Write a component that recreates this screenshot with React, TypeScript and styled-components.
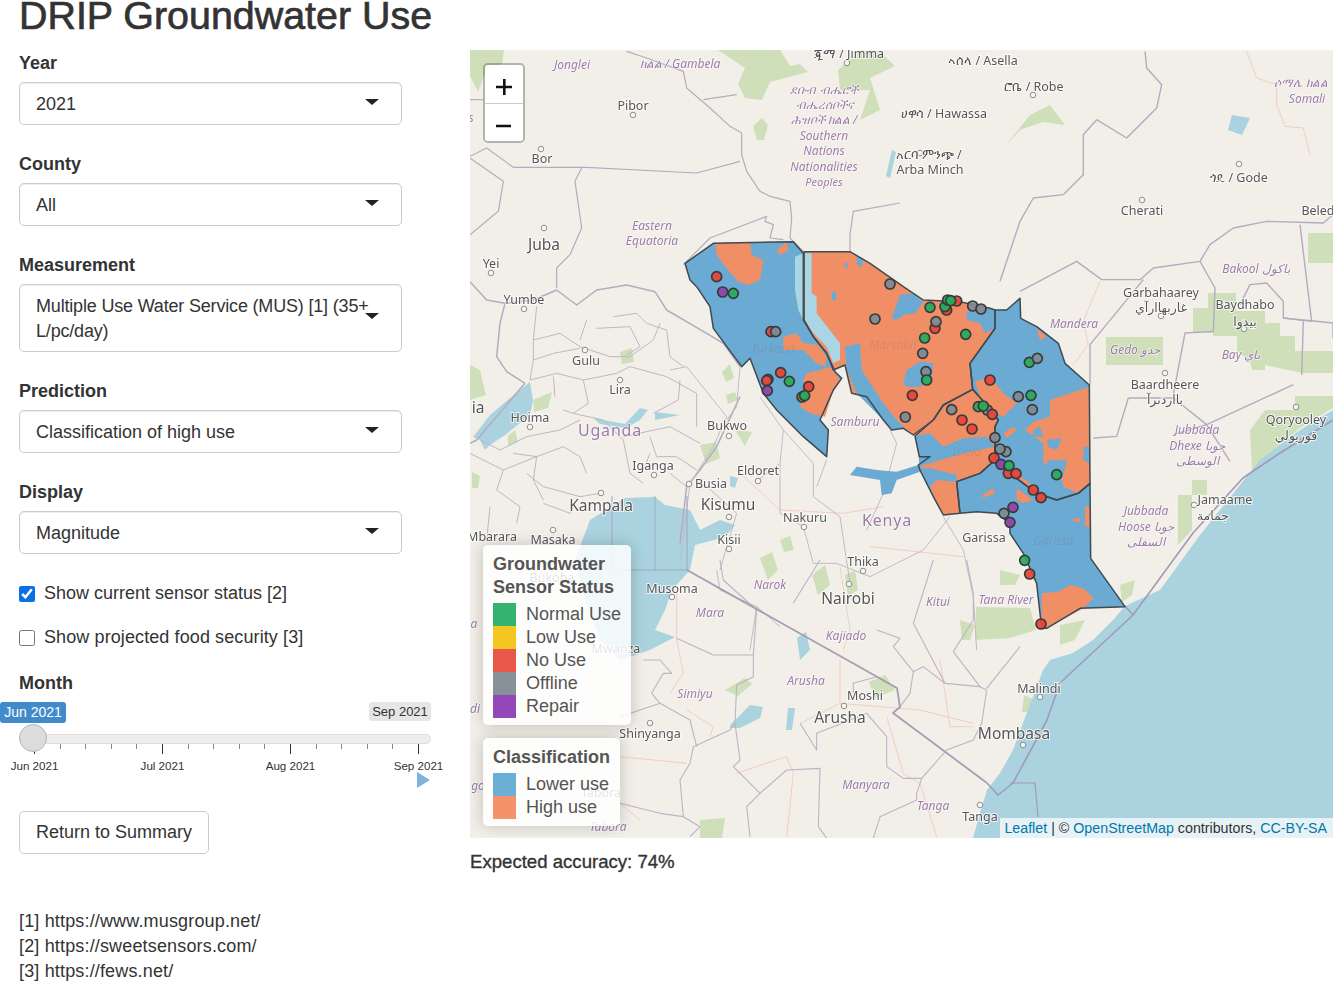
import React from "react";
import styled, { createGlobalStyle } from "styled-components";

const GlobalStyle = createGlobalStyle`
  html, body { margin: 0; padding: 0; height: 982px; overflow: hidden; background: #fff; }
  body { font-family: "Liberation Sans", Arial, sans-serif; color: #333; }
`;

const Page = styled.div`
  width: 1333px;
  height: 982px;
  overflow: hidden;
`;
const Title = styled.h1`
  margin: -5px 0 15px 19px;
  font-size: 39.4px;
  line-height: 40px;
  font-weight: 400;
  -webkit-text-stroke: 0.7px #333;
  color: #333;
`;
const Row = styled.div`
  display: flex;
  align-items: flex-start;
`;
const Sidebar = styled.div`
  width: 470px;
  flex: none;
  padding-left: 19px;
  box-sizing: border-box;
  font-size: 18px;
  line-height: 25px;
`;
const Group = styled.div`
  width: 383px;
  margin-bottom: 26px;
`;
const Label = styled.div`
  font-weight: 700;
  padding-top: 1px;
  margin-bottom: 6px;
`;
const SelectBox = styled.div<{ $tight?: boolean }>`
  position: relative;
  border: 1px solid #ccc;
  border-radius: 5px;
  padding: 9px 16px 7px;
  background: #fff;
  box-shadow: inset 0 1px 1px rgba(0, 0, 0, 0.075);
  letter-spacing: ${(p) => (p.$tight ? "-0.18px" : "0")};
`;
const Caret = styled.span`
  position: absolute;
  right: 22px;
  top: calc(50% - 5px);
  border-style: solid;
  border-width: 6px 7px 0 7px;
  border-color: #222 transparent transparent transparent;
`;
const CheckRow = styled.label<{ $after: number; $wide?: boolean }>`
  display: flex;
  align-items: center;
  gap: 9px;
  height: 25px;
  padding-top: 1px;
  margin-bottom: ${(p) => p.$after}px;
  letter-spacing: ${(p) => (p.$wide ? "0.1px" : "0")};
`;
const CheckInput = styled.input`
  width: 16px;
  height: 16px;
  margin: 0;
  accent-color: #0b6fe8;
`;
const MonthLabel = styled(Label)`
  margin-bottom: 0;
`;
const SliderRoot = styled.div`
  position: relative;
  width: 413px;
  height: 90px;
  padding-top: 38px;
  box-sizing: border-box;
`;
const Track = styled.div`
  margin-left: 14px;
  width: 398px;
  height: 10px;
  box-sizing: border-box;
  border: 1px solid #ddd;
  border-radius: 5px;
  background: #eee;
`;
const Handle = styled.div`
  position: absolute;
  left: 0;
  top: 28px;
  width: 28px;
  height: 28px;
  box-sizing: border-box;
  border-radius: 50%;
  border: 1px solid #b5b5b5;
  background: #dcdcdc;
`;
const Badge = styled.div<{ $active?: boolean }>`
  position: absolute;
  top: 6px;
  left: ${(p) => (p.$active ? "-19px" : "350px")};
  width: ${(p) => (p.$active ? "66px" : "62px")};
  height: ${(p) => (p.$active ? "21px" : "19px")};
  border-radius: 3px;
  text-align: center;
  font-size: ${(p) => (p.$active ? "14px" : "13px")};
  line-height: ${(p) => (p.$active ? "21px" : "19px")};
  background: ${(p) => (p.$active ? "#428bca" : "#e6e6e6")};
  color: ${(p) => (p.$active ? "#fff" : "#333")};
`;
const TickRow = styled.div`
  display: flex;
  justify-content: space-between;
  margin-left: 15px;
  width: 385px;
`;
const Tick = styled.span<{ $major: boolean }>`
  width: 1px;
  height: ${(p) => (p.$major ? "10px" : "5px")};
  background: ${(p) => (p.$major ? "#333" : "#888")};
`;
const TickLabels = styled.div`
  display: flex;
  justify-content: space-between;
  margin: 3px 0 0 15px;
  width: 385px;
  font-size: 11.6px;
  line-height: 17px;
`;
const TickLabel = styled.span`
  width: 1px;
  display: flex;
  justify-content: center;
  white-space: nowrap;
`;
const Play = styled.div`
  width: 0;
  height: 0;
  margin: -2px 0 0 398px;
  border-style: solid;
  border-width: 8px 0 8px 13px;
  border-color: transparent transparent transparent #7fb2dd;
`;
const Button = styled.button`
  display: block;
  margin-top: 25px;
  padding: 8px 16px;
  border: 1px solid #ccc;
  border-radius: 5px;
  background: #fff;
  color: #333;
  font: inherit;
  line-height: 25px;
`;
const Notes = styled.div`
  margin-top: 55px;
  white-space: nowrap;
  letter-spacing: 0.16px;
`;
const Main = styled.div`
  flex: 1;
  min-width: 0;
`;
const MapBox = styled.div`
  position: relative;
  height: 788px;
  overflow: hidden;
  background: #f2efe9;
`;
const MapSvg = styled.svg`
  display: block;
  filter: blur(0.45px);
`;
const ZoomBar = styled.div`
  position: absolute;
  left: 13px;
  top: 13px;
  border: 2px solid rgba(0, 0, 0, 0.25);
  border-radius: 5px;
  overflow: hidden;
  background-clip: padding-box;
`;
const ZoomButton = styled.div`
  width: 38px;
  height: 38px;
  box-sizing: border-box;
  padding-top: 6px;
  background: #fff;
  display: flex;
  align-items: center;
  justify-content: center;
  & + & { border-top: 1px solid #ccc; }
`;
const LegendStack = styled.div`
  position: absolute;
  left: 13px;
  bottom: 12px;
  display: flex;
  flex-direction: column;
  align-items: flex-start;
  gap: 13px;
`;
const Legend = styled.div`
  padding: 8px 10px 7px;
  border-radius: 5px;
  background: rgba(255, 255, 255, 0.84);
  box-shadow: 0 0 15px rgba(0, 0, 0, 0.2);
  color: #555;
  font-size: 18px;
  line-height: 23px;
`;
const LegendTitle = styled.div`
  font-weight: 700;
  margin-bottom: 4px;
`;
const LegendItem = styled.div`
  display: flex;
  gap: 10px;
  white-space: nowrap;
`;
const Swatch = styled.i<{ $c: string }>`
  width: 23px;
  height: 23px;
  background: ${(p) => p.$c};
`;
const Attribution = styled.div`
  position: absolute;
  right: 0;
  bottom: 0;
  padding: 0 6px 0 4px;
  height: 20px;
  line-height: 20px;
  font-size: 14.25px;
  color: #333;
  background: rgba(255, 255, 255, 0.7);
`;
const MapLink = styled.span`
  color: #0078a8;
`;
const Accuracy = styled.div`
  margin-top: 11px;
  font-size: 18.6px;
  line-height: 25px;
  -webkit-text-stroke: 0.35px #333;
`;

const Line = styled.polyline<{ $c?: string; $w?: number }>`
  fill: none;
  stroke: ${(p) => p.$c || "#b5abbf"};
  stroke-width: ${(p) => p.$w || 1.2}px;
  stroke-linejoin: round;
  vector-effect: non-scaling-stroke;
`;
const Area = styled.polygon<{ $c: string; $o?: number }>`
  fill: ${(p) => p.$c};
  opacity: ${(p) => p.$o ?? 1};
`;
const Border = styled.polygon`
  fill: none;
  stroke: #3e4a52;
  stroke-width: 1.5px;
  stroke-linejoin: round;
  vector-effect: non-scaling-stroke;
`;
const Dot = styled.circle<{ $c: string }>`
  fill: ${(p) => p.$c};
  stroke: #3a3a3a;
  stroke-width: 1.7px;
  fill-opacity: 0.95;
  vector-effect: non-scaling-stroke;
`;
const Place = styled.circle`
  fill: #f8f6f2;
  stroke: #8d8d8d;
  stroke-width: 1px;
`;
const City = styled.text<{ $s?: number }>`
  font-family: "Noto Sans", "DejaVu Sans", sans-serif;
  font-size: ${(p) => p.$s || 12.5}px;
  fill: #555;
  text-anchor: middle;
  stroke: rgba(255, 255, 255, 0.75);
  stroke-width: 2px;
  paint-order: stroke;
`;
const Region = styled.text<{ $s?: number; $plain?: boolean }>`
  font-family: "Noto Sans", "DejaVu Sans", sans-serif;
  font-size: ${(p) => p.$s || 12}px;
  font-style: ${(p) => (p.$plain ? "normal" : "italic")};
  letter-spacing: ${(p) => (p.$plain ? "0.8px" : "0")};
  fill: #9b7ca8;
  text-anchor: middle;
  stroke: rgba(255, 255, 255, 0.6);
  stroke-width: 1.5px;
  paint-order: stroke;
`;
const Faint = styled.text`
  font-family: "Noto Sans", sans-serif;
  font-size: 36px;
  font-style: italic;
  text-anchor: middle;
  opacity: 0.18;
  fill: #7a5a7a;
`;

const WATER = "#aad3df";
const GREEN = "#cfdfba";
const PINK = "#efcbbb";
const BLUE = "#6baad3";
const ORANGE = "#f08f66";
const PALE = "#a9d5e5";
const RED = "#e8453a";
const LIME = "#25ad5c";
const GRAY = "#7f8a93";
const PURPLE = "#8e44ad";

// frames: each list was traced on a 3x crop, so it is drawn at 1/3 scale from the crop's corner
const Frame = ({ x, y, children }: { x: number; y: number; children: React.ReactNode }) => (
  <g transform={`translate(${x} ${y}) scale(${1 / 3})`}>{children}</g>
);

const topLines = [
  "470,10 530,30 640,70 650,120 720,180 780,235 815,255 815,320 830,370 870,430 900,445 960,460 965,510 960,570 1000,610",
  "0,325 50,300 130,358 350,358 680,375 810,340",
  "335,360 315,400 335,540 300,620 260,660 260,720",
  "0,330 100,400 85,490 0,560",
  "640,650 720,570 890,505 885,520 910,530 900,570 940,575",
  "700,155 800,140",
  "1140,720 1140,560 1150,490 1290,465",
  "0,155 40,155",
];
const ugandaLines = [
  "0,125 50,180 105,190 90,250 80,350 110,395 165,430",
  "105,190 190,180 260,150 320,195 380,150 470,135 555,155",
  "555,155 590,210 710,280 760,310 810,380",
  "810,470 740,620 690,690 650,740 630,910",
  "165,430 20,600 0,610",
];
const ugandaThin = [
  "190,300 270,280 330,320 420,350 480,350 550,300 570,250",
  "190,360 250,340 330,325",
  "350,240 330,300",
  "380,265 480,260 510,320 470,345",
  "430,230 500,220 530,250 590,270 600,350 640,380",
  "180,420 260,400 340,420 355,490 310,520 280,510",
  "250,410 255,470",
  "340,420 440,400 480,380 590,410 680,460 680,560",
  "630,420 625,480 550,520",
  "310,520 400,540 460,600 480,700 520,730",
  "30,600 90,630 170,590 270,570 330,540",
  "100,690 200,650 280,620 330,650 350,700",
  "0,640 100,690 80,750 150,800 140,850",
  "170,700 220,740 330,770 390,760",
  "220,790 300,820 320,780",
  "460,590 600,560 690,610",
  "540,590 560,650 620,650 680,690",
  "600,700 650,740",
  "200,200 190,300 190,360 180,420",
  "130,640 200,650 190,720 220,780",
  "60,800 50,900",
  "520,690 540,640",
];
const kenyaWest = [
  "0,420 50,410 170,560 130,650 60,760",
  "210,410 200,530 170,570",
  "270,500 340,600 330,700 265,750",
  "340,600 430,700 430,800 510,860 540,1060",
  "470,690 440,770",
  "660,600 680,640 640,790 590,900",
  "820,860 880,960 910,1100 920,1260",
  "140,1020 150,1080 260,1130 330,1190",
  "260,1130 240,1260",
  "500,1000 600,1040 680,1000 760,960 840,860",
  "100,760 200,850 150,1020",
  "330,700 330,850 400,890 430,1000 500,1000",
  "60,760 30,1000",
];
const kenyaPink = [
  "200,720 330,840 520,850 640,830",
  "600,950 880,980",
  "510,1010 540,1200 520,1260",
];
const tzLines = [
  "170,235 280,285 400,285 410,150",
  "400,285 400,350 350,375 345,490 330,510 220,560 210,610 180,660 190,770 240,800 210,830",
  "345,490 360,600 340,620 420,700 500,630 600,625 595,800 620,835",
  "420,700 380,740 390,830",
  "540,490 590,570 590,520 640,500 740,460 800,530 800,620 850,655 905,655 890,700",
  "890,700 890,720 780,770 760,835",
  "880,335 910,320 975,370 1080,380 1000,275 1060,180 1060,100 1040,0",
  "880,335 870,400 840,440",
  "770,210 840,235 820,260 880,335",
  "940,0 880,190 975,370",
  "1080,380 1100,390 1085,490 1060,540 980,570 905,655",
  "1100,385 1200,260",
  "120,430 210,480 230,560",
  "0,470 120,430 95,400 130,340 155,340 120,300 70,300",
  "0,730 120,760 190,770",
  "300,0 310,60 410,150",
  "600,0 550,80 520,130",
  "700,400 700,370 770,350 830,385",
];
const tzPink = [
  "0,590 200,610",
  "170,100 170,240 190,340 150,400",
  "660,300 660,430 540,490",
  "200,450 280,500 270,530",
  "350,640 500,590 520,640 500,830",
  "660,430 900,450 1060,490",
  "800,470 850,640 900,670 950,830",
  "0,730 60,780",
  "960,300 990,500 1060,500",
];
const eastLines = [
  "435,10 440,60 485,110 470,180 380,270 290,215 250,260 250,380 190,440 100,450 60,520 0,700",
  "60,730 230,640 305,695 420,695 460,660 600,640 630,590 700,540 800,520 970,525 999,500",
  "430,695 270,890 270,1010",
  "600,640 645,720 640,850 555,855 520,1040",
  "900,530 935,820 850,810 850,760 800,705 750,710 720,770",
  "850,810 999,825",
  "910,820 905,980",
  "999,825 999,870",
  "385,1050 350,1165 280,1170",
  "385,1050 520,1050 620,1130 880,1010",
  "520,1160 620,1130 690,1240",
];
const eastPink = [
  "740,10 770,90 830,110 830,170 855,235 910,240 930,320",
  "300,700 250,820 265,890 220,950",
];

const TURKANA = "45,100 130,40 370,35 400,70 400,270 430,320 470,370 495,425 515,445 490,480 450,570 475,600 470,680 400,620 320,540 280,490 240,385 215,410 130,295 120,230 80,170 60,150";
const MARSABIT = "402,65 540,65 600,100 700,170 760,210 870,215 960,235 975,240 975,295 900,400 908,478 820,525 790,570 730,615 700,595 665,600 640,570 590,500 545,490 525,405 490,420 470,370 430,320 402,270";
const WAJIR = "975,240 1010,240 1050,205 1052,265 1100,290 1165,340 1185,400 1258,465 1260,760 1225,790 1160,810 1100,790 1040,745 1000,710 975,690 975,590 985,570 950,525 908,478 900,400 975,295";
const ISIOLO = "908,478 950,525 985,570 975,590 975,690 930,730 860,755 870,850 820,855 790,800 750,720 745,705 780,680 748,680 735,618 790,570 820,525";
const GARISSA = "860,755 930,730 975,690 1000,710 1040,745 1100,790 1160,810 1225,790 1260,760 1262,985 1365,1130 1230,1135 1130,1195 1115,1195 1100,1060 1060,970 1020,910 1020,880 980,850 920,845 870,850";

const counties: [string, string][] = [
  // base fills, then the patches on top
  [BLUE, TURKANA],
  [ORANGE, "135,40 240,35 245,75 280,90 270,150 235,165 205,155 170,115 140,75"],
  [ORANGE, "320,60 350,35 355,60 330,75"],
  [ORANGE, "340,320 380,310 400,340 445,345 470,380 465,410 440,400 400,360 340,360"],
  [ORANGE, "410,430 450,420 480,410 510,450 490,480 465,560 420,550 390,530 410,490 400,450"],
  [PALE, "375,80 400,70 400,270 385,240 375,180"],
  [ORANGE, MARSABIT],
  [PALE, "405,70 425,70 425,190 440,200 440,250 510,340 510,390 490,400 470,350 430,310 405,270"],
  [BLUE, "525,350 570,340 575,420 640,520 680,570 705,595 665,600 630,560 560,490 530,420"],
  [BLUE, "665,265 690,195 730,190 760,215 735,250 700,255 680,270"],
  [BLUE, "700,460 710,420 750,395 790,400 785,450 750,470 710,470"],
  [BLUE, "890,245 960,235 975,240 975,295 945,310 930,280 890,270"],
  [BLUE, "560,80 580,85 575,115 560,100"],
  [BLUE, "485,185 498,185 498,210 485,210"],
  [BLUE, "520,100 535,100 530,118"],
  [BLUE, WAJIR],
  [ORANGE, "1100,295 1130,320 1110,330"],
  [ORANGE, "1140,510 1200,490 1260,470 1260,760 1225,790 1180,770 1170,710 1120,700 1120,640 1065,600 1090,575 1140,560"],
  [ORANGE, "915,455 960,440 1000,490 1040,520 1000,560 960,540 930,500"],
  [ORANGE, "1000,610 1030,590 1040,600 1010,625"],
  [ORANGE, "1010,720 1040,730 1080,760 1100,790 1060,770"],
  [BLUE, "1090,600 1110,590 1120,620 1090,620"],
  [BLUE, "1130,630 1175,625 1160,660 1135,650"],
  [BLUE, "1240,650 1260,650 1260,700 1240,690"],
  [BLUE, "1130,690 1190,690 1180,740 1150,750"],
  [ORANGE, ISIOLO],
  [BLUE, "735,618 780,610 820,650 880,625 950,620 975,650 880,670 830,685 780,700 748,710 745,660"],
  [BLUE, "745,715 780,715 860,735 860,755 800,750 780,770 790,800"],
  [BLUE, "540,735 560,710 620,720 680,725 745,705 750,725 680,750 665,790 635,795 630,750"],
  [BLUE, GARISSA],
  [ORANGE, "1115,1090 1165,1085 1200,1065 1240,1075 1270,1105 1240,1135 1130,1195 1115,1195"],
  [ORANGE, "930,800 970,775 975,790 950,800"],
  [ORANGE, "1040,775 1090,810 1060,820 1040,810"],
  [ORANGE, "1245,830 1262,830 1262,890 1245,890"],
  [ORANGE, "1210,865 1230,865 1230,875 1210,875"],
];
const countyEdges = [TURKANA, MARSABIT, WAJIR, ISIOLO, GARISSA];
const sensors: [number, number, string][] = [
  [140, 140, RED], [158, 186, PURPLE], [190, 190, LIME],
  [303, 305, RED], [317, 305, GRAY],
  [332, 428, RED], [294, 448, LIME], [290, 452, RED], [292, 482, PURPLE], [358, 454, LIME],
  [416, 470, RED], [396, 501, "#8a7a1c"], [404, 497, LIME],
  [660, 162, GRAY], [615, 267, GRAY],
  [860, 213, RED], [780, 232, LIME], [830, 240, RED], [825, 230, LIME], [833, 210, LIME], [842, 212, LIME],
  [908, 228, GRAY], [933, 237, GRAY],
  [795, 295, RED], [798, 275, GRAY], [764, 324, LIME], [887, 313, LIME], [758, 370, GRAY],
  [768, 425, GRAY], [770, 450, LIME], [727, 496, RED], [706, 561, GRAY],
  [845, 539, GRAY], [876, 570, RED], [906, 597, RED], [952, 540, GRAY], [925, 530, LIME], [940, 528, LIME],
  [967, 553, RED], [960, 450, RED],
  [1078, 397, LIME], [1102, 385, GRAY], [1045, 500, GRAY], [1083, 496, LIME], [1087, 539, GRAY],
  [975, 623, GRAY], [1008, 665, GRAY], [990, 657, GRAY], [972, 684, RED], [993, 703, PURPLE],
  [1015, 730, RED], [1017, 707, LIME], [1038, 731, RED], [1160, 734, LIME], [1090, 780, RED], [1113, 803, RED],
  [1002, 850, GRAY], [1029, 832, PURPLE], [1020, 877, PURPLE], [1064, 991, LIME], [1079, 1032, RED], [1113, 1182, RED],
];

const places: [number, number][] = [
  [633, 115], [541, 149], [544, 228], [491, 273], [524, 309], [585, 350], [620, 380], [530, 427], [729, 436], [654, 475],
  [758, 481], [689, 484], [729, 517], [804, 527], [729, 549], [553, 530], [601, 493], [672, 597], [863, 571], [849, 584], [844, 706],
  [650, 723], [1023, 745], [1040, 697], [980, 805], [1194, 505], [1161, 316], [1244, 329], [1165, 373], [1296, 407],
  [1142, 200], [1239, 164], [1033, 95], [847, 63], [920, 153],
];
const cities: [string, number, number, number?][] = [
  ["Pibor", 633, 110], ["Bor", 542, 163], ["Juba", 544, 250, 15.5], ["Yei", 491, 268], ["Yumbe", 524, 304],
  ["Gulu", 586, 365], ["Lira", 620, 394], ["Hoima", 530, 422], ["Bukwo", 727, 430], ["Iganga", 653, 470],
  ["Eldoret", 758, 475], ["Busia", 711, 488], ["Kisumu", 728, 510, 15.5], ["Kampala", 601, 511, 15.5],
  ["Nakuru", 805, 522], ["Kisii", 729, 544], ["Masaka", 553, 544], ["Mbarara", 492, 541], ["Musoma", 672, 593],
  ["Thika", 863, 566], ["Nairobi", 848, 604, 15.5], ["Garissa", 984, 542], ["Moshi", 865, 700],
  ["Arusha", 840, 723, 15.5], ["Shinyanga", 650, 738], ["Mombasa", 1014, 739, 15.5], ["Malindi", 1039, 693],
  ["Tanga", 980, 821], ["Jamaame", 1225, 504], ["جمامة", 1213, 520],
  ["Tabora", 601, 797], ["Mwanza", 616, 653], ["Bukoba", 552, 582],
  ["Garbahaarey", 1161, 297], ["غاربهاارآي", 1161, 312], ["Baydhabo", 1245, 309], ["بيدوا", 1245, 326],
  ["Baardheere", 1165, 389], ["بااردىرآ", 1165, 404], ["Qoryooley", 1296, 424], ["قوريولي", 1296, 440],
  ["Cherati", 1142, 215], ["ጎዴ / Gode", 1239, 182], ["Beled", 1318, 215], ["ሮቤ / Robe", 1034, 91],
  ["ኣሰላ / Asella", 983, 65], ["ጂማ / Jimma", 849, 58], ["ሀዋሳ / Hawassa", 944, 118], ["አርባ ምንጭ /", 929, 159],
  ["Arba Minch", 930, 174], ["ia", 478, 413, 15.5],
];
const regions: [string, number, number, number?, boolean?][] = [
  ["Jonglei", 572, 69], ["ክልል / Gambela", 680, 68], ["ደቡብ ብሔሮች", 824, 94], ["ብሔረሰቦችና", 824, 109],
  ["ሕዝቦች ክልል /", 824, 124], ["Southern", 824, 140], ["Nations", 824, 155], ["Nationalities", 824, 171],
  ["Peoples", 824, 186, 11], ["Eastern", 652, 230], ["Equatoria", 652, 245], ["Uganda", 610, 436, 16, true],
  ["Kenya", 887, 526, 16, true], ["Mandera", 1074, 328], ["Gedo جدو", 1135, 354], ["Bakool باكول", 1256, 273],
  ["Bay باي", 1241, 359], ["Jubbada", 1197, 434], ["Dhexe جوبا", 1197, 450], ["الوسطى", 1197, 465],
  ["Jubbada", 1146, 515], ["Hoose جوبا", 1146, 531], ["السفلى", 1146, 546], ["ሶማሌ ክልል", 1301, 87],
  ["Somali", 1307, 103], ["Samburu", 855, 426], ["Tana River", 1006, 604], ["Kitui", 938, 606],
  ["Narok", 770, 589], ["Mara", 710, 617], ["Kajiado", 846, 640], ["Simiyu", 695, 698], ["Arusha", 806, 685],
  ["Manyara", 866, 789], ["Tanga", 933, 810], ["Tabora", 608, 831], ["s", 471, 122], ["a", 474, 628],
  ["di", 475, 713], ["go", 478, 790],
];

const greens = [
  // top left, Ethiopia highlands
  "470,50 504,50 502,64 487,68 478,92 470,76",
  "718,50 780,50 790,66 800,64 808,72 770,82 762,100 745,98 738,84 745,68",
  "860,50 880,52 895,66 870,78 880,110 860,120 870,90 840,90 838,70",
  "1002,150 1030,115 1050,105 1065,125 1043,122 1020,130",
  "753,126 762,118 768,125 764,140 757,140",
  // Somalia farmland
  "1106,337 1163,337 1163,365 1106,365",
  "1193,308 1208,308 1208,293 1236,293 1236,311 1265,311 1265,323 1280,323 1280,336 1295,336 1295,351 1333,351 1333,373 1302,373 1265,365 1265,370 1252,370 1250,361 1237,351 1237,336 1213,336 1213,333 1193,333",
  "1308,233 1333,233 1333,263 1308,263",
  "1295,396 1333,396 1333,408 1300,428 1252,470 1250,430 1265,410 1295,410",
  "1178,495 1192,495 1192,530 1178,545",
  "1192,480 1207,480 1207,495 1192,495",
  // Tana and Kenya coast
  "976,607 1030,608 1036,630 1010,638 975,640",
  "960,620 975,625 970,640 962,640",
  "1120,585 1135,580 1132,595 1122,602",
  "1060,625 1085,620 1075,640 1060,645",
  "1024,695 1035,700 1028,712 1022,712",
  "1000,570 1020,575 1015,585 1000,585",
  // Kenya highlands and Tanzania
  "760,558 772,552 778,570 768,580",
  "812,575 825,565 830,585 818,595",
  "845,575 855,570 858,590 848,596",
  "725,690 745,678 752,684 738,696",
  "869,682 885,675 895,690 875,698",
  "700,820 725,818 722,838 700,838",
  "780,540 790,536 794,550 784,552",
  // Uganda patches
  "533,400 552,392 548,408 534,412",
  "470,365 480,370 486,395 470,400",
  "472,472 480,476 478,488 472,488",
  "700,445 716,442 720,458 706,464",
  "735,430 752,432 745,446",
  "722,372 730,364 734,378 726,382",
  "726,395 735,392 738,400 728,404",
  "508,436 515,430 518,442 508,446",
  "620,352 632,348 634,362 622,364",
];
const waters = [
  "1333,410 1300,430 1260,460 1200,535 1160,590 1125,606 1113,620 1093,640 1073,653 1050,660 1043,670 1033,697 1023,723 1013,750 1000,773 987,790 980,813 973,838 1333,838",
  "625,498 655,497 665,505 690,510 700,530 720,520 735,525 725,537 695,545 690,570 672,590 665,610 655,630 675,637 650,650 620,660 600,640 585,600 575,560 590,520",
  "530,382 533,400 530,415 505,435 490,445 485,450 480,440 473,437 490,415 510,398",
];
const lakeShapes = [
  "797,638 806,632 810,650 800,660",
  "730,725 750,705 763,707 760,718 740,728 730,728",
  "788,708 795,708 792,730 786,730",
  "593,418 625,424 640,408 648,410 640,420 626,428 600,424",
  "655,412 680,415 655,420",
  "730,476 738,478 735,488 730,486",
  "1018,797 1026,795 1022,817 1014,817",
  "1232,115 1250,118 1242,135 1228,130",
  "892,150 886,176 890,178 896,152",
];

export default function App() {
  return (
    <Page>
      <GlobalStyle />
      <Title>DRIP Groundwater Use</Title>
      <Row>
        <Sidebar>
          <Group>
            <Label>Year</Label>
            <SelectBox>2021<Caret /></SelectBox>
          </Group>
          <Group>
            <Label>County</Label>
            <SelectBox>All<Caret /></SelectBox>
          </Group>
          <Group>
            <Label>Measurement</Label>
            <SelectBox $tight>Multiple Use Water Service (MUS) [1] (35+ L/pc/day)<Caret /></SelectBox>
          </Group>
          <Group>
            <Label>Prediction</Label>
            <SelectBox>Classification of high use<Caret /></SelectBox>
          </Group>
          <Group>
            <Label>Display</Label>
            <SelectBox>Magnitude<Caret /></SelectBox>
          </Group>
          <CheckRow $after={18}>
            <CheckInput type="checkbox" defaultChecked />
            Show current sensor status [2]
          </CheckRow>
          <CheckRow $after={20} $wide>
            <CheckInput type="checkbox" />
            Show projected food security [3]
          </CheckRow>
          <MonthLabel>Month</MonthLabel>
          <SliderRoot>
            <Badge $active>Jun 2021</Badge>
            <Badge>Sep 2021</Badge>
            <Track />
            <Handle />
            <TickRow>
              {Array.from({ length: 16 }, (_, i) => (
                <Tick key={i} $major={i % 5 === 0} />
              ))}
            </TickRow>
            <TickLabels>
              <TickLabel>Jun 2021</TickLabel>
              <TickLabel>Jul 2021</TickLabel>
              <TickLabel>Aug 2021</TickLabel>
              <TickLabel>Sep 2021</TickLabel>
            </TickLabels>
            <Play />
          </SliderRoot>
          <Button>Return to Summary</Button>
          <Notes>
            <div>[1] https://www.musgroup.net/</div>
            <div>[2] https://sweetsensors.com/</div>
            <div>[3] https://fews.net/</div>
          </Notes>
        </Sidebar>
        <Main>
          <MapBox>
            <MapSvg width="863" height="788" viewBox="470 50 863 788">
              {greens.map((p) => <Area key={p} $c={GREEN} points={p} />)}
              {waters.map((p) => <Area key={p} $c={WATER} points={p} />)}
              {lakeShapes.map((p) => <Area key={p} $c={WATER} points={p} />)}

              <Frame x={470} y={48}>
                {topLines.map((p) => <Line key={p} points={p} />)}
              </Frame>
              <Frame x={470} y={240}>
                {ugandaThin.map((p) => <Line key={p} points={p} $c="#bfb5c7" $w={1} />)}
                {ugandaLines.map((p) => <Line key={p} points={p} $w={1.5} />)}
              </Frame>
              <Frame x={670} y={230}>
                {kenyaPink.map((p) => <Line key={p} points={p} $c={PINK} $w={0.9} />)}
                {kenyaWest.map((p) => <Line key={p} points={p} $c="#c2b9c9" $w={1} />)}
              </Frame>
              <Frame x={620} y={560}>
                {tzPink.map((p) => <Line key={p} points={p} $c={PINK} $w={0.9} />)}
                {tzLines.map((p) => <Line key={p} points={p} $c="#bcb3c4" $w={1.1} />)}
              </Frame>
              <Frame x={1000} y={48}>
                {eastPink.map((p) => <Line key={p} points={p} $c={PINK} $w={0.9} />)}
                {eastLines.map((p) => <Line key={p} points={p} $w={1.4} />)}
              </Frame>
              {/* national and maritime borders */}
              <Line points="687,570 897,688 900,707 893,713 987,783" $c="#a79db3" $w={1.8} />
              <Line points="1333,420 1280,453 1243,478 1193,533 1133,615 1060,683 1047,720 1013,783 998,795 987,783" $c="#9f9ab8" $w={1.6} />
              <Line points="1125,606 1133,615" $c="#9f9ab8" $w={1.4} />
              <Line points="1010,783 1035,783 1038,817" $c="#9f9ab8" $w={1.2} />
              <Line points="612,496 612,570 687,570 687,496" $c="#9fa6c0" $w={1} />
              <Line points="655,496 655,570" $c="#9fa6c0" $w={0.8} />

              {places.map(([x, y]) => <Place key={`${x}-${y}`} cx={x} cy={y} r={2.8} />)}
              {cities.map(([t, x, y, s]) => <City key={t + x} x={x} y={y} $s={s}>{t}</City>)}
              {regions.map(([t, x, y, s, plain]) => <Region key={t + x} x={x} y={y} $s={s} $plain={plain}>{t}</Region>)}

              <Frame x={670} y={230}>
                {counties.map(([c, p]) => <Area key={p} $c={c} points={p} />)}
                {countyEdges.map((p) => <Border key={p} points={p} />)}
                <Faint x={310} y={370}>Turkana</Faint>
                <Faint x={670} y={358}>Marsabit</Faint>
                <Faint x={890} y={678}>Isiolo</Faint>
                <Faint x={1150} y={945}>Garissa</Faint>
                {sensors.map(([x, y, c], i) => <Dot key={i} cx={x} cy={y} r={15} $c={c} />)}
              </Frame>
            </MapSvg>
            <ZoomBar>
              <ZoomButton>
                <svg width="18" height="18" viewBox="0 0 18 18"><path d="M8 1h2.6v6.7H17v2.6h-6.4V17H8v-6.7H1V7.7h7z" fill="#111" /></svg>
              </ZoomButton>
              <ZoomButton>
                <svg width="18" height="18" viewBox="0 0 18 18"><path d="M1 7.8h15v2.4H1z" fill="#111" /></svg>
              </ZoomButton>
            </ZoomBar>
            <LegendStack>
              <Legend>
                <LegendTitle>Groundwater<br />Sensor Status</LegendTitle>
                <LegendItem><Swatch $c="#33b36d" />Normal Use</LegendItem>
                <LegendItem><Swatch $c="#f4c61f" />Low Use</LegendItem>
                <LegendItem><Swatch $c="#e9574a" />No Use</LegendItem>
                <LegendItem><Swatch $c="#87919a" />Offline</LegendItem>
                <LegendItem><Swatch $c="#9248b8" />Repair</LegendItem>
              </Legend>
              <Legend>
                <LegendTitle>Classification</LegendTitle>
                <LegendItem><Swatch $c="#6baed6" />Lower use</LegendItem>
                <LegendItem><Swatch $c="#f4936b" />High use</LegendItem>
              </Legend>
            </LegendStack>
            <Attribution>
              <MapLink>Leaflet</MapLink> | © <MapLink>OpenStreetMap</MapLink> contributors, <MapLink>CC-BY-SA</MapLink>
            </Attribution>
          </MapBox>
          <Accuracy>Expected accuracy: 74%</Accuracy>
        </Main>
      </Row>
    </Page>
  );
}
